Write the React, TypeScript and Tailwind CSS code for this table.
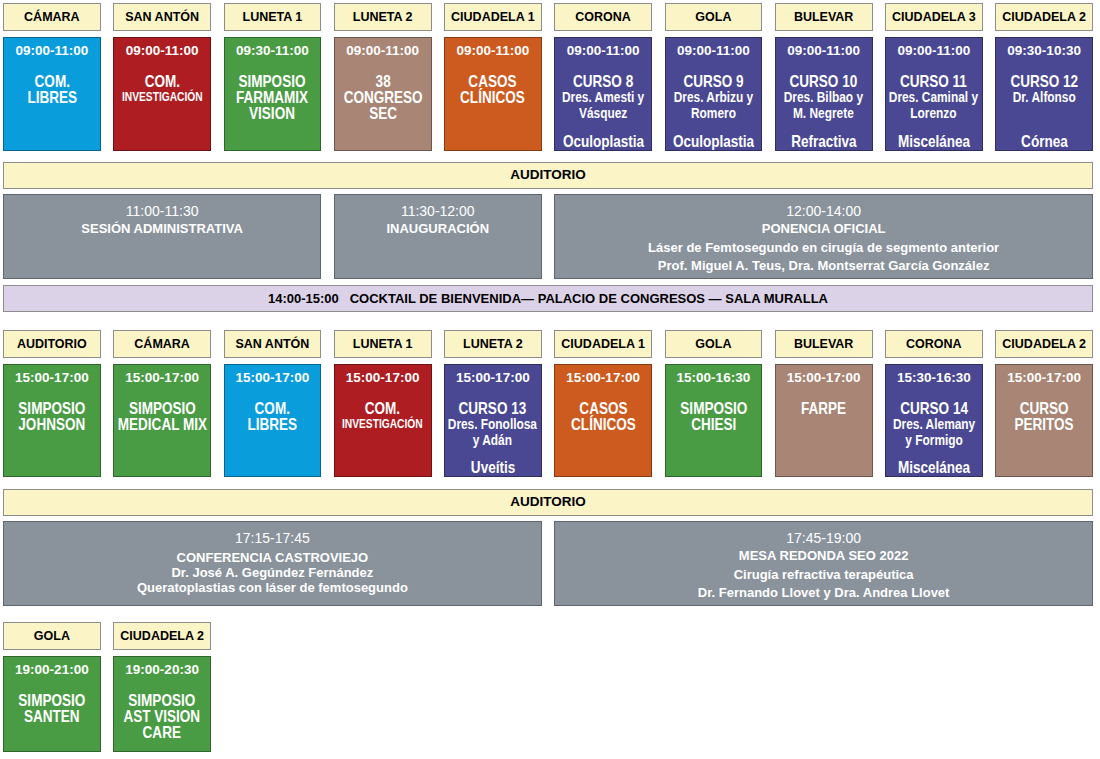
type Session = {
  room: string;
  time: string;
  title: string[];
  small?: string;
  sub?: string[];
  foot?: string;
  color: string;
};

const BLUE = "bg-[#0a9ddc]";
const RED = "bg-[#ad1d21]";
const GREEN = "bg-[#4a9c44]";
const TAUPE = "bg-[#a88574]";
const ORANGE = "bg-[#cd5a1e]";
const INDIGO = "bg-[#4a4893]";

const morning: Session[] = [
  { room: "CÁMARA", time: "09:00-11:00", title: ["COM.", "LIBRES"], color: BLUE },
  { room: "SAN ANTÓN", time: "09:00-11:00", title: ["COM."], small: "INVESTIGACIÓN", color: RED },
  { room: "LUNETA 1", time: "09:30-11:00", title: ["SIMPOSIO", "FARMAMIX", "VISION"], color: GREEN },
  { room: "LUNETA 2", time: "09:00-11:00", title: ["38", "CONGRESO", "SEC"], color: TAUPE },
  { room: "CIUDADELA 1", time: "09:00-11:00", title: ["CASOS", "CLÍNICOS"], color: ORANGE },
  { room: "CORONA", time: "09:00-11:00", title: ["CURSO 8"], sub: ["Dres. Amesti y", "Vásquez"], foot: "Oculoplastia", color: INDIGO },
  { room: "GOLA", time: "09:00-11:00", title: ["CURSO 9"], sub: ["Dres. Arbizu y", "Romero"], foot: "Oculoplastia", color: INDIGO },
  { room: "BULEVAR", time: "09:00-11:00", title: ["CURSO 10"], sub: ["Dres. Bilbao y", "M. Negrete"], foot: "Refractiva", color: INDIGO },
  { room: "CIUDADELA 3", time: "09:00-11:00", title: ["CURSO 11"], sub: ["Dres. Caminal y", "Lorenzo"], foot: "Miscelánea", color: INDIGO },
  { room: "CIUDADELA 2", time: "09:30-10:30", title: ["CURSO 12"], sub: ["Dr. Alfonso"], foot: "Córnea", color: INDIGO },
];

const afternoon: Session[] = [
  { room: "AUDITORIO", time: "15:00-17:00", title: ["SIMPOSIO", "JOHNSON"], color: GREEN },
  { room: "CÁMARA", time: "15:00-17:00", title: ["SIMPOSIO", "MEDICAL MIX"], color: GREEN },
  { room: "SAN ANTÓN", time: "15:00-17:00", title: ["COM.", "LIBRES"], color: BLUE },
  { room: "LUNETA 1", time: "15:00-17:00", title: ["COM."], small: "INVESTIGACIÓN", color: RED },
  { room: "LUNETA 2", time: "15:00-17:00", title: ["CURSO 13"], sub: ["Dres. Fonollosa", "y Adán"], foot: "Uveítis", color: INDIGO },
  { room: "CIUDADELA 1", time: "15:00-17:00", title: ["CASOS", "CLÍNICOS"], color: ORANGE },
  { room: "GOLA", time: "15:00-16:30", title: ["SIMPOSIO", "CHIESI"], color: GREEN },
  { room: "BULEVAR", time: "15:00-17:00", title: ["FARPE"], color: TAUPE },
  { room: "CORONA", time: "15:30-16:30", title: ["CURSO 14"], sub: ["Dres. Alemany", "y Formigo"], foot: "Miscelánea", color: INDIGO },
  { room: "CIUDADELA 2", time: "15:00-17:00", title: ["CURSO", "PERITOS"], color: TAUPE },
];

const evening: Session[] = [
  { room: "GOLA", time: "19:00-21:00", title: ["SIMPOSIO", "SANTEN"], color: GREEN },
  { room: "CIUDADELA 2", time: "19:00-20:30", title: ["SIMPOSIO", "AST VISION", "CARE"], color: GREEN },
];

// no narrow face installed, so the condensed titles are squeezed horizontally
const condensed = "scale-x-[0.82] origin-center";

function RoomHeader({ room }: { room: string }) {
  return (
    <div className="h-[28px] flex items-center justify-center bg-[#fbf4c6] border border-[#8d8d8d] text-[12.5px] font-bold text-black whitespace-nowrap">
      {room}
    </div>
  );
}

function SessionCard({ s, height }: { s: Session; height: string }) {
  return (
    <div className={`${s.color} ${height} border border-black/35 flex flex-col items-center text-white text-center pt-[5px] pb-[1px] overflow-hidden`}>
      <div className="text-[13.5px] font-bold leading-4 whitespace-nowrap">{s.time}</div>
      <div className={`${condensed} mt-[14px] font-bold text-[16.5px] leading-4`}>
        {s.title.map((t) => (
          <div key={t} className="whitespace-nowrap">{t}</div>
        ))}
        {s.small && <div className="text-[12.5px] leading-[17px] whitespace-nowrap">{s.small}</div>}
        {s.sub?.map((t) => (
          <div key={t} className="text-[14.5px] whitespace-nowrap">{t}</div>
        ))}
      </div>
      {s.foot && <div className={`${condensed} mt-auto font-bold text-[16.5px] leading-4 whitespace-nowrap`}>{s.foot}</div>}
    </div>
  );
}

function Band({ children, tone, size }: { children: React.ReactNode; tone: string; size: string }) {
  return (
    <div className={`${tone} ${size} col-span-10 h-[27px] flex items-center justify-center border border-[#8d8d8d] font-bold text-black whitespace-pre`}>
      {children}
    </div>
  );
}

function GrayBox({ span, lines, tight }: { span: string; lines: string[]; tight?: boolean }) {
  const [time, ...rest] = lines;
  return (
    <div className={`${span} h-[85px] bg-[#8a939c] border border-[#5f666d] flex flex-col items-center text-white text-center pt-[7px]`}>
      <div className="text-[14px] leading-[18px]">{time}</div>
      <div className={`text-[13px] font-bold ${tight ? "mt-[3px] leading-[15px]" : "leading-[18.5px]"}`}>
        {rest.map((l) => (
          <div key={l} className="whitespace-nowrap">{l}</div>
        ))}
      </div>
    </div>
  );
}

export default function App() {
  return (
    <div className="w-[1100px] h-[759px] bg-white pl-[3px] pt-[3px] font-['Liberation_Sans',Arial,sans-serif] overflow-hidden">
      <div className="w-[1090px] grid grid-cols-10 gap-x-[12.5px]">
        {morning.map((s) => (
          <RoomHeader key={s.room} room={s.room} />
        ))}
      </div>
      <div className="w-[1090px] grid grid-cols-10 gap-x-[12.5px] mt-[6px]">
        {morning.map((s) => (
          <SessionCard key={s.room} s={s} height="h-[114px]" />
        ))}
      </div>

      <div className="w-[1090px] grid grid-cols-10 gap-x-[12.5px] mt-[11px]">
        <Band tone="bg-[#fbf4c6]" size="text-[13.5px]">AUDITORIO</Band>
      </div>
      <div className="w-[1090px] grid grid-cols-10 gap-x-[12.5px] mt-[5px]">
        <GrayBox span="col-span-3" lines={["11:00-11:30", "SESIÓN ADMINISTRATIVA"]} />
        <GrayBox span="col-span-2" lines={["11:30-12:00", "INAUGURACIÓN"]} />
        <GrayBox
          span="col-span-5"
          lines={[
            "12:00-14:00",
            "PONENCIA OFICIAL",
            "Láser de Femtosegundo en cirugía de segmento anterior",
            "Prof. Miguel A. Teus, Dra. Montserrat García González",
          ]}
        />
      </div>
      <div className="w-[1090px] grid grid-cols-10 gap-x-[12.5px] mt-[6px]">
        <Band tone="bg-[#dcd2e8]" size="text-[13px]">
          {"14:00-15:00   COCKTAIL DE BIENVENIDA— PALACIO DE CONGRESOS — SALA MURALLA"}
        </Band>
      </div>

      <div className="w-[1090px] grid grid-cols-10 gap-x-[12.5px] mt-[18px]">
        {afternoon.map((s) => (
          <RoomHeader key={s.room} room={s.room} />
        ))}
      </div>
      <div className="w-[1090px] grid grid-cols-10 gap-x-[12.5px] mt-[6px]">
        {afternoon.map((s) => (
          <SessionCard key={s.room} s={s} height="h-[113px]" />
        ))}
      </div>

      <div className="w-[1090px] grid grid-cols-10 gap-x-[12.5px] mt-[12px]">
        <Band tone="bg-[#fbf4c6]" size="text-[13.5px]">AUDITORIO</Band>
      </div>
      <div className="w-[1090px] grid grid-cols-10 gap-x-[12.5px] mt-[5px]">
        <GrayBox
          span="col-span-5"
          tight
          lines={[
            "17:15-17:45",
            "CONFERENCIA CASTROVIEJO",
            "Dr. José A. Gegúndez Fernández",
            "Queratoplastias con láser de femtosegundo",
          ]}
        />
        <GrayBox
          span="col-span-5"
          lines={[
            "17:45-19:00",
            "MESA REDONDA SEO 2022",
            "Cirugía refractiva terapéutica",
            "Dr. Fernando Llovet y Dra. Andrea Llovet",
          ]}
        />
      </div>

      <div className="w-[1090px] grid grid-cols-10 gap-x-[12.5px] mt-[16px]">
        {evening.map((s) => (
          <RoomHeader key={s.room} room={s.room} />
        ))}
      </div>
      <div className="w-[1090px] grid grid-cols-10 gap-x-[12.5px] mt-[6px]">
        {evening.map((s) => (
          <SessionCard key={s.room} s={s} height="h-[96px]" />
        ))}
      </div>
    </div>
  );
}
